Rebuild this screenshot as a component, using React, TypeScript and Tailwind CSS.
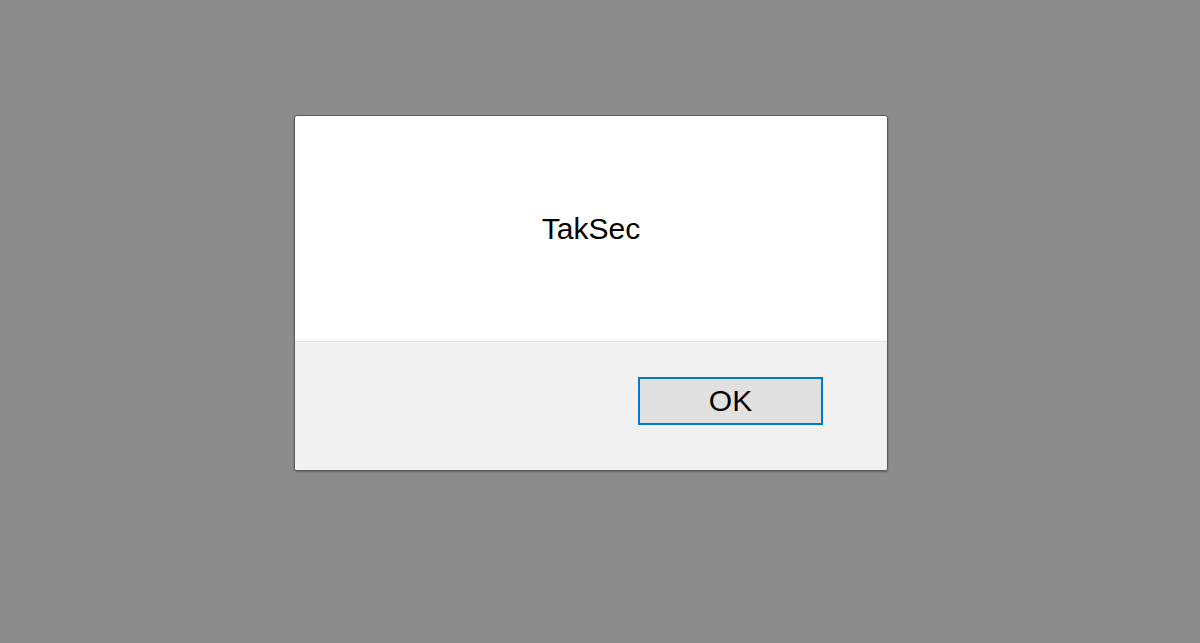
export default function App() {
  return (
    <div className="h-[643px] w-[1200px] bg-[#8c8c8c] pl-[294px] pt-[115px] font-['Liberation_Sans',Arial,sans-serif]">
      <div className="flex w-[594px] flex-col overflow-hidden rounded-[3px] border border-[#5a5a5a] bg-white shadow-[0_1px_2px_rgba(0,0,0,0.3)]">
        <div className="flex h-[225px] items-center justify-center text-[30px] text-black">TakSec</div>
        <div className="flex h-[129px] justify-end border-t border-[#e3e3e3] bg-[#f1f1f1] pr-[64px] pt-[35px]">
          <button className="h-[48px] w-[185px] border-2 border-[#0078d7] bg-[#e1e1e1] text-[30px] leading-none text-black">
            OK
          </button>
        </div>
      </div>
    </div>
  )
}
